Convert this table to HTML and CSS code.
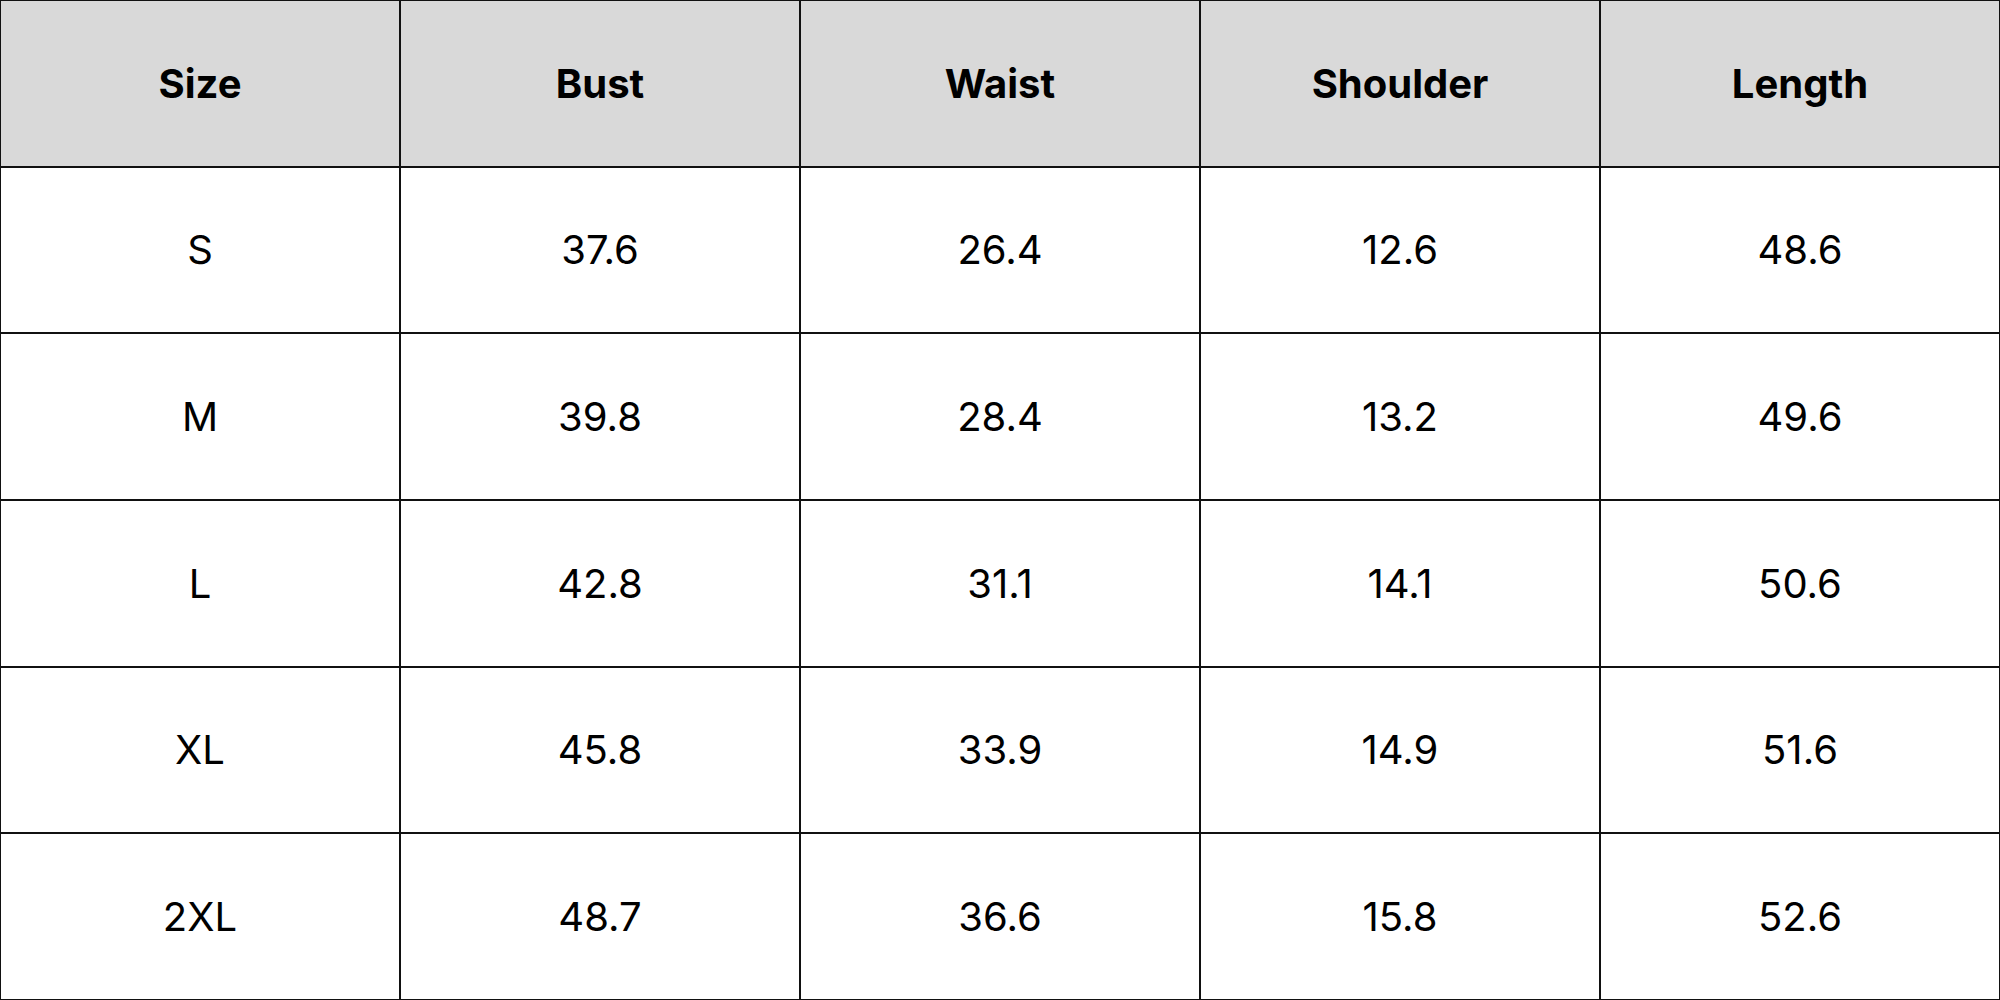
FILE: index.html
```html
<!DOCTYPE html>
<html>
<head>
<meta charset="utf-8">
<link rel="stylesheet" href="styles.css">
</head>
<body>
<div class="chart">
  <div class="cell head">Size</div><div class="cell head">Bust</div><div class="cell head">Waist</div><div class="cell head">Shoulder</div><div class="cell head">Length</div>
  <div class="cell">S</div><div class="cell">37.6</div><div class="cell">26.4</div><div class="cell">12.6</div><div class="cell">48.6</div>
  <div class="cell">M</div><div class="cell">39.8</div><div class="cell">28.4</div><div class="cell">13.2</div><div class="cell">49.6</div>
  <div class="cell">L</div><div class="cell">42.8</div><div class="cell">31.1</div><div class="cell">14.1</div><div class="cell">50.6</div>
  <div class="cell">XL</div><div class="cell">45.8</div><div class="cell">33.9</div><div class="cell">14.9</div><div class="cell">51.6</div>
  <div class="cell">2XL</div><div class="cell">48.7</div><div class="cell">36.6</div><div class="cell">15.8</div><div class="cell">52.6</div>
</div>
</body>
</html>
```
FILE: styles.css
```css
html, body {
  margin: 0;
  padding: 0;
  background: #fff;
  overflow: hidden;
}
.chart {
  box-sizing: border-box;
  width: 2000px;
  height: 1000px;
  padding: 1px;
  gap: 2px;
  background: #111;
  display: grid;
  grid-template-columns: repeat(5, 1fr);
  grid-template-rows: repeat(6, 1fr);
  font-family: "Inter", "Open Sans", sans-serif;
  color: #000;
}
.cell {
  background: #fff;
  display: flex;
  align-items: center;
  justify-content: center;
  font-size: 40px;
  font-weight: 400;
}
.head {
  background: #d9d9d9;
  font-weight: 700;
}
```
